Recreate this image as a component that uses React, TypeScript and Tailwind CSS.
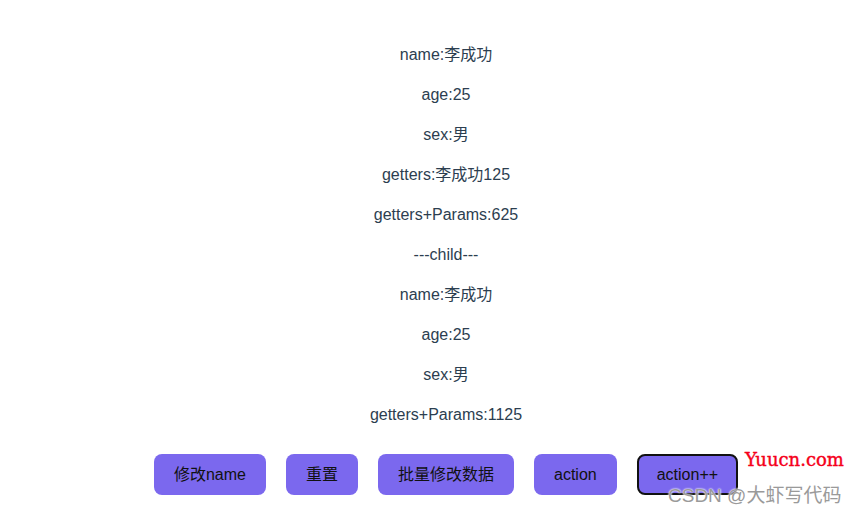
export default function App() {
  const lines = [
    "name:李成功",
    "age:25",
    "sex:男",
    "getters:李成功125",
    "getters+Params:625",
    "---child---",
    "name:李成功",
    "age:25",
    "sex:男",
    "getters+Params:1125",
  ];
  const btn =
    "h-[41px] px-[19px] rounded-[8px] bg-[#7b68ee] text-[16px] text-[#111] border border-transparent";
  return (
    <div
      className="relative w-[855px] h-[515px] bg-white overflow-hidden pt-[27px] pl-[37px] text-center text-[16px] text-[#2c3e50]"
      style={{ fontFamily: '"Liberation Sans", Arial, "Noto Sans CJK SC", sans-serif' }}
    >
      {lines.map((l, i) => (
        <p key={i} className="my-4 leading-6">
          {l}
        </p>
      ))}
      <div className="mt-[27px] flex justify-center gap-5">
        <button className={btn}>修改name</button>
        <button className={btn}>重置</button>
        <button className={btn}>批量修改数据</button>
        <button className={btn}>action</button>
        <button className="h-[41px] px-[18px] rounded-[8px] bg-[#7b68ee] text-[16px] text-[#111] border-2 border-[#111]">
          action++
        </button>
      </div>
      <div
        className="absolute left-[745px] top-[448px] text-[18px] leading-6 text-[#f5001a]"
        style={{ fontFamily: '"DejaVu Serif", "Liberation Serif", serif', WebkitTextStroke: "0.4px #f5001a" }}
      >
        Yuucn.com
      </div>
      <div
        className="absolute left-[668px] top-[484px] text-[19px] leading-6 text-[#9a9a9a] whitespace-nowrap"
        style={{
          fontFamily: '"Liberation Sans", Arial, "Noto Sans CJK SC", sans-serif',
          textShadow: "0 0 2px #fff, 0 0 2px #fff",
        }}
      >
        CSDN @大虾写代码
      </div>
    </div>
  );
}
